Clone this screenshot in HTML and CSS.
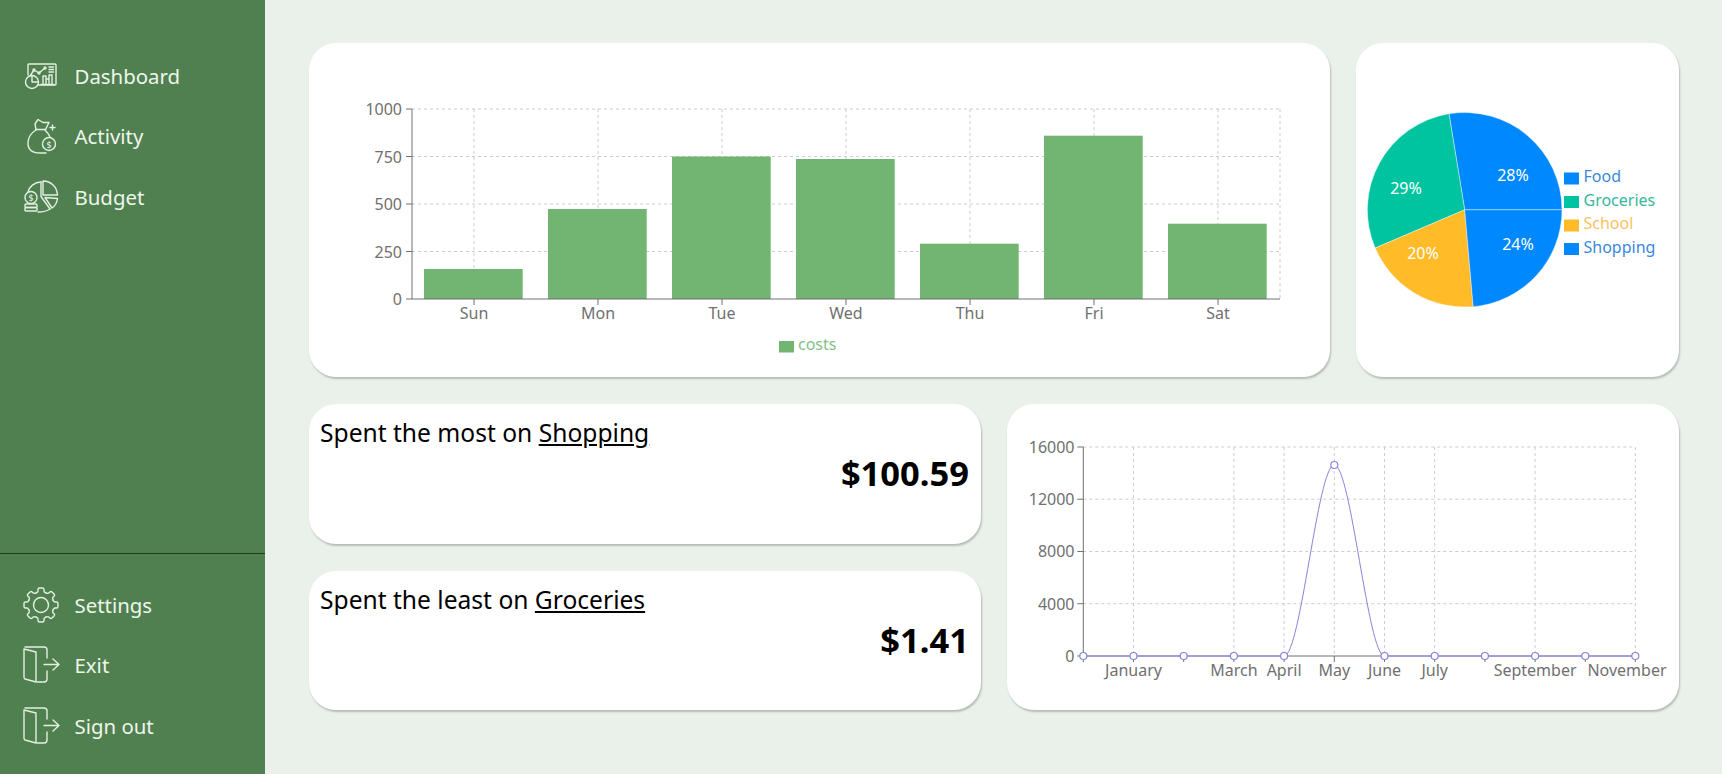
FILE: index.html
```html
<!DOCTYPE html>
<html lang="en">
<head>
<meta charset="utf-8">
<title>Dashboard</title>
<link rel="stylesheet" href="styles.css">
</head>
<body>
<div class="app">
  <aside class="sidebar">
    <nav class="nav nav-top">
      <a class="nav-item">
        <svg class="icon" viewBox="0 0 38 38"><path d="M16 28H33q1 0 1-1V8q0-1-1-1H7q-1 0-1 1v10"/><path d="M8 19l4-6 5 3 6-5"/><circle cx="12" cy="13" r="1"/><circle cx="17" cy="16" r="1"/><circle cx="23" cy="11" r="1"/><circle cx="10" cy="25" r="6.5"/><path d="M10 25v-6.5M10 25h6.5"/><path d="M21 27V19h3v8M24 27V22h3v5M27 27V18h3v9M19 27.5h13"/><path d="M27 10h4.5M27 12.5h4.5M27 15h4.5"/></svg>
        <span>Dashboard</span>
      </a>
      <a class="nav-item">
        <svg class="icon" viewBox="0 0 38 38"><path d="M14 13C9 16 6 21 6 26c0 7 5 10 12 10h6"/><path d="M23 13c2 2 4 4 5 7"/><path d="M14 12.500h9.500"/><path d="M14 12.500 13 7l3-4.500 5 3h6l-3.500 7"/><circle cx="27" cy="27" r="6.500"/><text class="coin" x="27" y="30.500">$</text><path d="M30.500 8v5M28 10.500h5"/></svg>
        <span>Activity</span>
      </a>
      <a class="nav-item">
        <svg class="icon" viewBox="0 0 38 38"><path d="M21 3c8 0 14 6 14.500 14H21z"/><path d="M23 19.500l12.500 1c-.5 4-2.500 7.500-5.500 9.500z"/><path d="M19 4c-6.500 0-12 5-13 10"/><path d="M19 4v14.500L28 31"/><path d="M28 31c-3.500 2.500-7.500 3-12 3"/><circle cx="9" cy="19.500" r="6"/><text class="coin" x="9" y="23">$</text><rect x="3" y="26" width="12" height="3.500" rx="1"/><rect x="3" y="29.500" width="12" height="3.500" rx="1"/></svg>
        <span>Budget</span>
      </a>
    </nav>
    <nav class="nav nav-bottom">
      <a class="nav-item">
        <svg class="icon" viewBox="-19 -19 38 38">
          <defs><path id="tooth" d="M-4.970-12.010-3.600-12.900Q-3-13.200-3-14.200V-15.500Q-3-17-1.500-17H1.500Q3-17 3-15.500V-14.200Q3-13.200 3.600-12.900L4.970-12.010"/></defs>
          <use href="#tooth"/><use href="#tooth" transform="rotate(45)"/><use href="#tooth" transform="rotate(90)"/><use href="#tooth" transform="rotate(135)"/><use href="#tooth" transform="rotate(180)"/><use href="#tooth" transform="rotate(225)"/><use href="#tooth" transform="rotate(270)"/><use href="#tooth" transform="rotate(315)"/>
          <circle r="7.500"/>
        </svg>
        <span>Settings</span>
      </a>
      <a class="nav-item">
        <svg class="icon" viewBox="0 0 38 38"><path d="M2 3l12 3v30L3 33q-1-.5-1-2z"/><path d="M3 1H22q3 0 3 3v8M25 25v8q0 3-3 3h-7"/><path d="M22 18.500h15M31 13l6 5.500-6 5.500"/></svg>
        <span>Exit</span>
      </a>
      <a class="nav-item">
        <svg class="icon" viewBox="0 0 38 38"><path d="M2 3l12 3v30L3 33q-1-.5-1-2z"/><path d="M3 1H22q3 0 3 3v8M25 25v8q0 3-3 3h-7"/><path d="M22 18.500h15M31 13l6 5.500-6 5.500"/></svg>
        <span>Sign out</span>
      </a>
    </nav>
  </aside>

  <main class="main">
    <section class="row row-top">
      <div class="card">
        <svg class="chart" viewBox="309 43 1021 334">
          <g class="grid">
            <path d="M412 109H1280M412 156.500H1280M412 204H1280M412 251.500H1280"/>
            <path d="M474 109V299M598 109V299M722 109V299M846 109V299M970 109V299M1094 109V299M1218 109V299M1280 109V299"/>
          </g>
          <g class="bars">
            <rect x="424" y="269" width="98.700" height="30"/>
            <rect x="548" y="209" width="98.700" height="90"/>
            <rect x="672" y="156.500" width="98.700" height="142.500"/>
            <rect x="796" y="159" width="98.700" height="140"/>
            <rect x="920" y="243.700" width="98.700" height="55.300"/>
            <rect x="1044" y="135.700" width="98.700" height="163.300"/>
            <rect x="1168" y="223.700" width="98.700" height="75.300"/>
          </g>
          <path class="axis" d="M412 109V299H1280M406 109h6M406 156.500h6M406 204h6M406 251.500h6M406 299h6M474 299v6M598 299v6M722 299v6M846 299v6M970 299v6M1094 299v6M1218 299v6"/>
          <g class="tick tick-y">
            <text x="402" y="115">1000</text><text x="402" y="162.500">750</text><text x="402" y="210">500</text><text x="402" y="257.500">250</text><text x="402" y="305">0</text>
          </g>
          <g class="tick tick-x">
            <text x="474" y="319">Sun</text><text x="598" y="319">Mon</text><text x="722" y="319">Tue</text><text x="846" y="319">Wed</text><text x="970" y="319">Thu</text><text x="1094" y="319">Fri</text><text x="1218" y="319">Sat</text>
          </g>
          <rect class="bar-key" x="779" y="341" width="15" height="11.500"/>
          <text class="bar-key-label" x="798" y="350">costs</text>
        </svg>
      </div>
      <div class="card">
        <svg class="chart" viewBox="1356 43 323 334">
          <path class="slice c-blue" d="M1464.700 209.800H1562A97.300 97.300 0 0 0 1449 113.800Z"/>
          <path class="slice c-green" d="M1464.700 209.800L1449 113.800A97.300 97.300 0 0 0 1375.200 248Z"/>
          <path class="slice c-amber" d="M1464.700 209.800L1375.200 248A97.300 97.300 0 0 0 1473.200 306.700Z"/>
          <path class="slice c-blue" d="M1464.700 209.800L1473.200 306.700A97.300 97.300 0 0 0 1562 209.800Z"/>
          <g class="pct">
            <text x="1513" y="180.500">28%</text><text x="1406" y="194">29%</text><text x="1423" y="258.500">20%</text><text x="1518" y="250">24%</text>
          </g>
          <rect class="c-blue" x="1564" y="172.500" width="15" height="12"/><text class="key t-blue" x="1583.500" y="182">Food</text>
          <rect class="c-green" x="1564" y="196" width="15" height="12"/><text class="key t-green" x="1583.500" y="205.500">Groceries</text>
          <rect class="c-amber" x="1564" y="219.500" width="15" height="12"/><text class="key t-amber" x="1583.500" y="229">School</text>
          <rect class="c-blue" x="1564" y="243" width="15" height="12"/><text class="key t-blue" x="1583.500" y="252.500">Shopping</text>
        </svg>
      </div>
    </section>

    <section class="row row-bottom">
      <div class="stats">
        <div class="card stat">
          <p class="stat-title">Spent the most on <u>Shopping</u></p>
          <p class="stat-value">$100.59</p>
        </div>
        <div class="card stat">
          <p class="stat-title">Spent the least on <u>Groceries</u></p>
          <p class="stat-value">$1.41</p>
        </div>
      </div>
      <div class="card">
        <svg class="chart" viewBox="1007 404 672 306">
          <g class="grid">
            <path d="M1083.300 447H1635M1083.300 499.200H1635M1083.300 551.500H1635M1083.300 603.700H1635"/>
            <path d="M1133.500 447V656M1233.900 447V656M1284.100 447V656M1334.300 447V656M1384.500 447V656M1434.700 447V656M1535.100 447V656M1635.300 447V656"/>
          </g>
          <path class="axis" d="M1083.300 447V656H1635M1077.300 447h6M1077.300 499.200h6M1077.300 551.500h6M1077.300 603.700h6M1077.300 656h6M1083.300 656v6M1133.500 656v6M1183.700 656v6M1233.900 656v6M1284.100 656v6M1334.300 656v6M1384.500 656v6M1434.700 656v6M1484.900 656v6M1535.100 656v6M1585.300 656v6M1635.300 656v6"/>
          <g class="tick tick-y">
            <text x="1074.500" y="452.500">16000</text><text x="1074.500" y="505">12000</text><text x="1074.500" y="557">8000</text><text x="1074.500" y="609.500">4000</text><text x="1074.500" y="662">0</text>
          </g>
          <g class="tick tick-x">
            <text x="1133.500" y="676">January</text><text x="1233.900" y="676">March</text><text x="1284.100" y="676">April</text><text x="1334.300" y="676">May</text><text x="1384.500" y="676">June</text><text x="1434.700" y="676">July</text><text x="1535.100" y="676">September</text><text x="1627" y="676">November</text>
          </g>
          <path class="curve" d="M1284.100 656C1300.800 656 1317.600 465 1334.300 465C1351 465 1367.800 656 1384.500 656"/>
          <path class="baseline" d="M1083.300 656H1284.100M1384.500 656H1635.300"/>
          <g class="dots">
            <circle cx="1083.300" cy="656" r="3.500"/><circle cx="1133.500" cy="656" r="3.500"/><circle cx="1183.700" cy="656" r="3.500"/><circle cx="1233.900" cy="656" r="3.500"/><circle cx="1284.100" cy="656" r="3.500"/><circle cx="1334.300" cy="465" r="3.500"/><circle cx="1384.500" cy="656" r="3.500"/><circle cx="1434.700" cy="656" r="3.500"/><circle cx="1484.900" cy="656" r="3.500"/><circle cx="1535.100" cy="656" r="3.500"/><circle cx="1585.300" cy="656" r="3.500"/><circle cx="1635.300" cy="656" r="3.500"/>
          </g>
        </svg>
      </div>
    </section>
  </main>
</div>
</body>
</html>
```
FILE: styles.css
```css
* { box-sizing: border-box; }

html, body {
  margin: 0;
  height: 100%;
  overflow: hidden;
}

body {
  font-family: "Noto Sans", "Open Sans", sans-serif;
  background: #e9f1ea;
  color: #000;
}

.app {
  display: flex;
  height: 100vh;
}

/* Sidebar */
.sidebar {
  flex: 0 0 265px;
  display: flex;
  flex-direction: column;
  justify-content: space-between;
  background: #508050;
  color: #eef6ec;
}

.nav {
  display: flex;
  flex-direction: column;
}

.nav-top { padding-top: 45.5px; }

.nav-bottom {
  padding: 21px 0 18px;
  border-top: 1px solid #1f3a20;
}

.nav-item {
  display: flex;
  align-items: center;
  gap: 14.5px;
  height: 60.5px;
  padding-left: 22px;
  font-size: 20.4px;
}

.icon {
  flex: none;
  width: 38px;
  height: 38px;
  fill: none;
  stroke: #e3f0e1;
  stroke-width: 1.4;
  stroke-linecap: round;
  stroke-linejoin: round;
}

.icon text.coin {
  font-size: 9px;
  text-anchor: middle;
  fill: #e3f0e1;
  stroke: none;
}

/* Main */
.main {
  flex: 1;
  display: flex;
  flex-direction: column;
  gap: 27px;
  padding: 43px 43px 0 44px;
}

.row { display: grid; }

.row-top {
  grid-template-columns: 1fr 323px;
  gap: 26px;
  height: 334px;
}

.row-bottom {
  grid-template-columns: 1fr 1fr;
  gap: 26px;
  height: 306px;
}

.stats {
  display: flex;
  flex-direction: column;
  gap: 27px;
}

.card {
  background: #fff;
  border-radius: 27px;
  box-shadow: 1px 2px 2px rgba(0, 0, 0, 0.22);
  overflow: hidden;
}

.stat {
  flex: 1;
  padding: 13px 12px 0 11px;
}

.stat-title {
  margin: 0;
  font-size: 24.6px;
  line-height: 32px;
}

.stat-value {
  margin: 1px 0 0;
  font-size: 34.5px;
  line-height: 46px;
  font-weight: 700;
  text-align: right;
}

/* Charts */
.chart {
  display: block;
  width: 100%;
  height: 100%;
}

.chart text { font-size: 16px; }

.grid path {
  fill: none;
  stroke: #ccc;
  stroke-dasharray: 3 3;
}

.axis {
  fill: none;
  stroke: #707070;
}

.tick text { fill: #707070; }
.tick-y text { text-anchor: end; }
.tick-x text { text-anchor: middle; }

.bars rect, .bar-key { fill: #72b572; }
.bar-key-label { fill: #85bf85; }

.slice {
  stroke: #fff;
  stroke-width: 0.4;
}

.c-blue { fill: #0088fe; }
.c-green { fill: #00c49f; }
.c-amber { fill: #ffbb28; }
.t-blue { fill: #3a88dc; }
.t-green { fill: #38b79c; }
.t-amber { fill: #f9c264; }

.pct text {
  fill: #fff;
  text-anchor: middle;
}

.curve {
  fill: none;
  stroke: #8884d8;
  stroke-width: 1;
}

.baseline {
  fill: none;
  stroke: #9c98e0;
  stroke-width: 1.5;
}

.dots circle {
  fill: #fff;
  stroke: #8884d8;
  stroke-width: 1.2;
}
```
